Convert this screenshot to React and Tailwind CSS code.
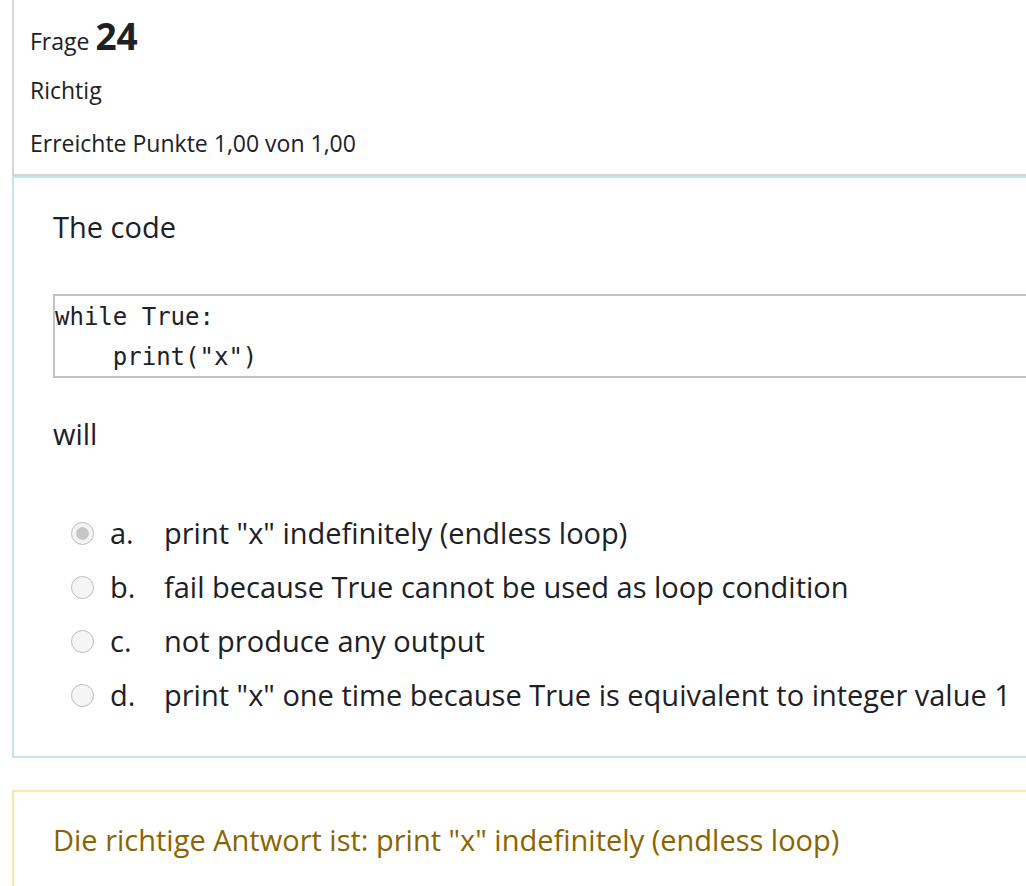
import React from 'react'

const options = [
  { key: 'a.', text: 'print "x" indefinitely (endless loop)', checked: true },
  { key: 'b.', text: 'fail because True cannot be used as loop condition' },
  { key: 'c.', text: 'not produce any output' },
  { key: 'd.', text: 'print "x" one time because True is equivalent to integer value 1' },
]

function Radio({ checked }) {
  return (
    <span className="flex h-[23px] w-[23px] shrink-0 items-center justify-center rounded-full border border-[#bdbdbd] bg-[#f5f5f5]">
      {checked && <span className="h-[13px] w-[13px] rounded-full bg-[#c6c6c6]" />}
    </span>
  )
}

export default function App() {
  return (
    <div
      className="min-h-[886px] w-[1026px] overflow-hidden bg-white pl-[12px] text-[#1d2125]"
      style={{ fontFamily: '"Open Sans", "Noto Sans", sans-serif' }}
    >
      <div className="w-[1100px]">
        {/* info */}
        <div className="h-[176px] border-b-2 border-l-2 border-[#d3d7dc] pl-[16px] pt-[16px]">
          <h3 className="flex h-[40px] items-baseline gap-[6px] leading-[40px]">
            <span className="text-[23px] font-medium">Frage</span>
            <span className="text-[37px] font-bold">24</span>
          </h3>
          <div className="mt-[20px] text-[23px] leading-[28px]">Richtig</div>
          <div className="mt-[25px] text-[23px] leading-[28px]">Erreichte Punkte 1,00 von 1,00</div>
        </div>

        {/* formulation */}
        <div className="h-[582px] border-2 border-[#c1e6eb] pl-[39px] pt-[31px]">
          <p className="text-[29px] leading-[36px]">The code</p>
          <pre
            className="mt-[49px] h-[84px] border-2 border-[#c0c5ca] pt-[1px] text-[24px] leading-[40px] text-[#1d2125]"
            style={{ fontFamily: '"DejaVu Sans Mono", monospace' }}
          >
{`while True:
    print("x")`}
          </pre>
          <p className="mt-[38px] text-[29px] leading-[36px]">will</p>
          <div className="mt-[54px] flex flex-col pl-[18px]">
            {options.map((o) => (
              <div key={o.key} className="flex h-[54px] items-center text-[29px]">
                <Radio checked={o.checked} />
                <span className="w-[70px] pl-[16px]">{o.key}</span>
                <span className="whitespace-nowrap">{o.text}</span>
              </div>
            ))}
          </div>
        </div>

        {/* outcome */}
        <div className="mt-[32px] h-[120px] border-2 border-[#fde8aa] pl-[39px] pt-[30px]">
          <p className="text-[29px] leading-[36px] text-[#8b6400]">
            Die richtige Antwort ist: print "x" indefinitely (endless loop)
          </p>
        </div>
      </div>
    </div>
  )
}
